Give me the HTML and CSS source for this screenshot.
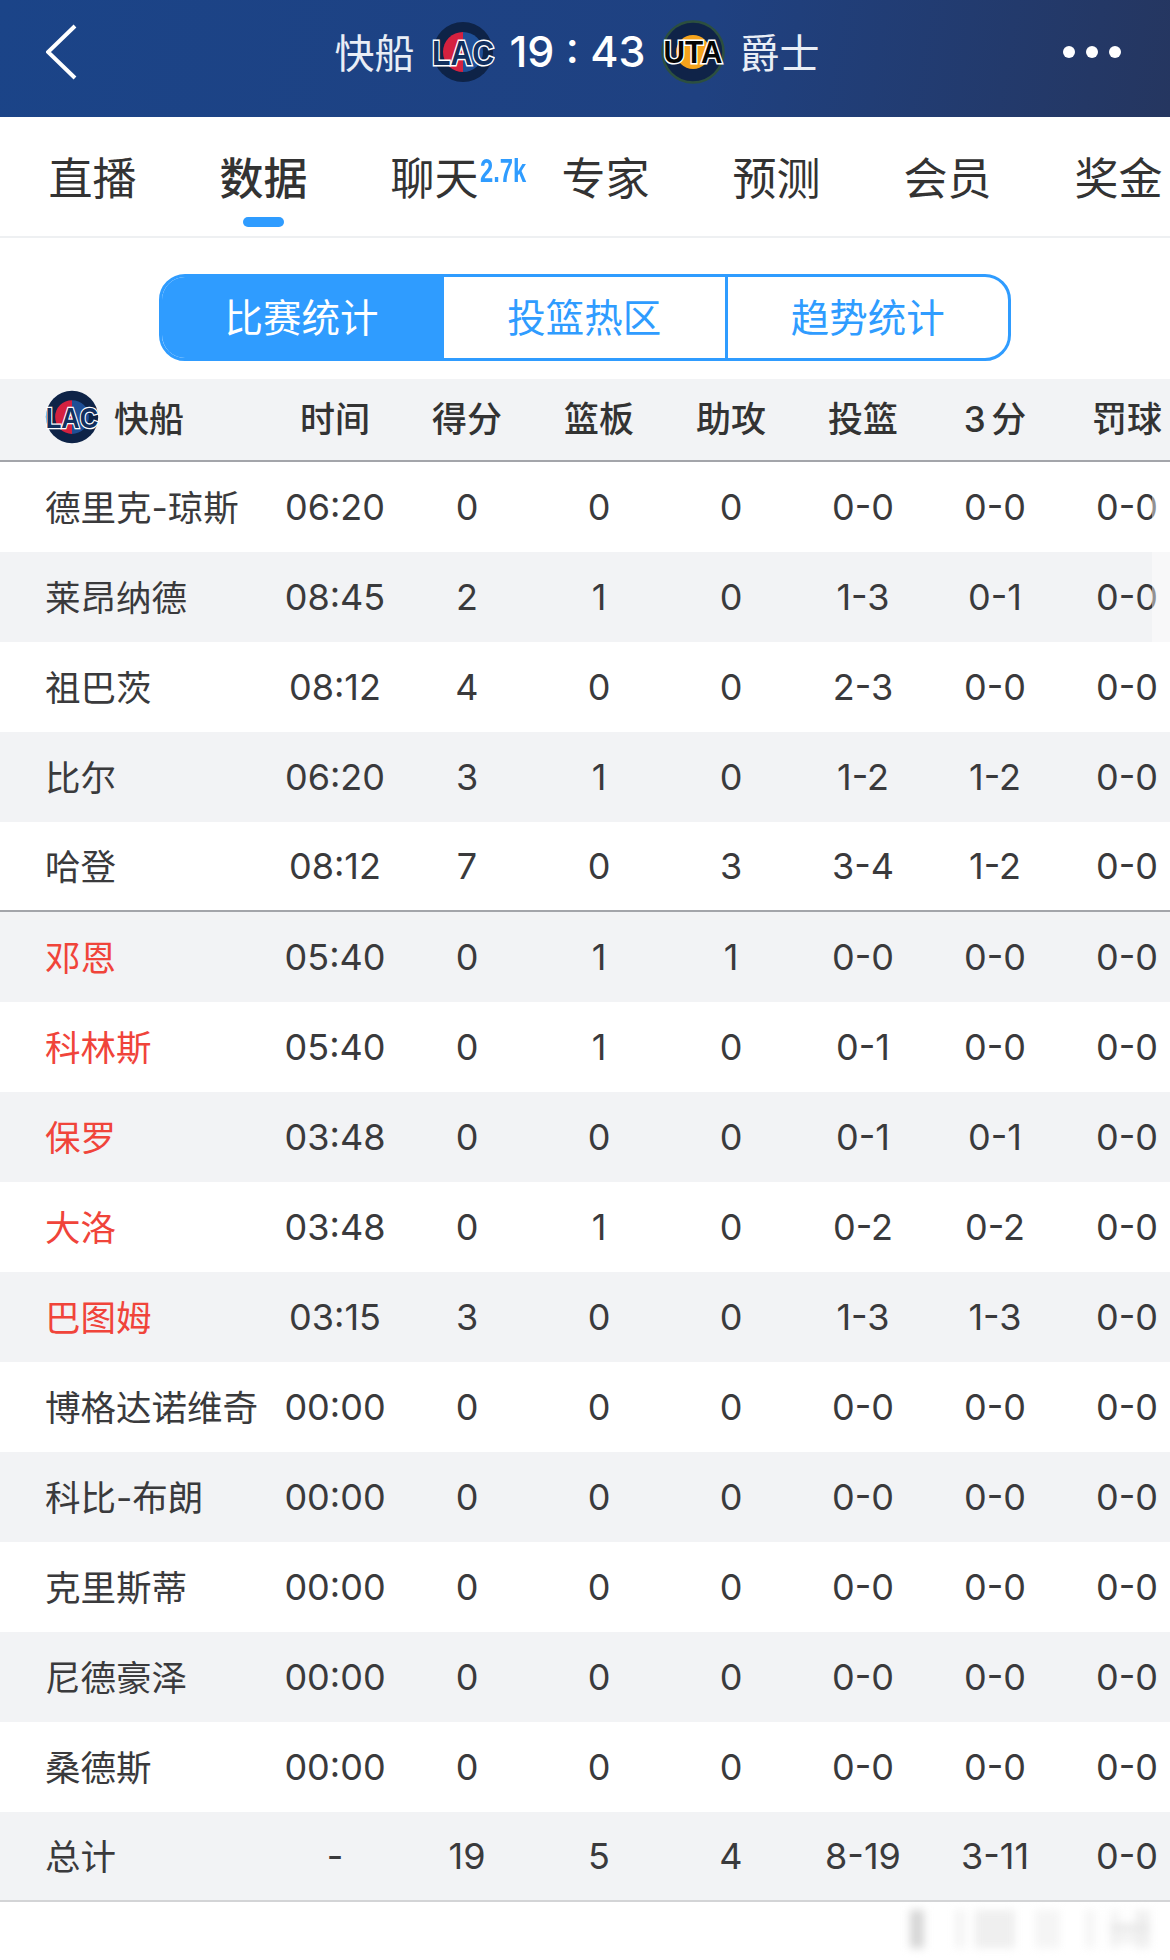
FILE: index.html
```html
<!DOCTYPE html>
<html lang="zh-CN">
<head>
<meta charset="utf-8">
<title>快船 19 : 43 爵士</title>
<link rel="stylesheet" href="styles.css">
</head>
<body>
<div class="page">
  <header class="topbar">
    <svg class="back" viewBox="0 0 32 56" width="32" height="56"><path d="M29 2 L2 28 L29 54" fill="none" stroke="#fff" stroke-width="4"/></svg>
    <div class="match">
      <span class="team">快船</span>
      <svg class="logo first" viewBox="0 0 64 64" width="64" height="64">
        <circle cx="32" cy="32" r="30" fill="#0e2347"/>
        <path d="M32 12a20 20 0 0 0 0 40z" fill="#d5213f"/>
        <path d="M32 12a20 20 0 0 1 0 40z" fill="#1f4f96"/>
        <text class="logo-text lac" text-anchor="middle" transform="translate(32 45) scale(.84 1)">LAC</text>
      </svg>
      <span class="score">19 : 43</span>
      <svg class="logo" viewBox="0 0 64 64" width="64" height="64">
        <circle cx="32" cy="32" r="30.5" fill="#0f2348" stroke="#2c4f3f" stroke-width="2.5"/>
        <circle cx="32" cy="32" r="17" fill="#f5a31c"/>
        <text class="logo-text uta" text-anchor="middle" transform="translate(32 43) scale(.93 1)">UTA</text>
      </svg>
      <span class="team">爵士</span>
    </div>
    <div class="dots"><i></i><i></i><i></i></div>
  </header>

  <nav class="tabs">
    <a class="tab">直播</a>
    <a class="tab active">数据</a>
    <a class="tab">聊天<sup class="badge">2.7k</sup></a>
    <a class="tab">专家</a>
    <a class="tab">预测</a>
    <a class="tab">会员</a>
    <a class="tab">奖金</a>
  </nav>

  <div class="seg-wrap">
    <div class="seg">
      <div class="seg-item on">比赛统计</div>
      <div class="seg-item">投篮热区</div>
      <div class="seg-item">趋势统计</div>
    </div>
  </div>

  <section class="table">
    <div class="row head">
      <div class="name">
        <svg class="logo-sm" viewBox="0 0 64 64" width="54" height="54">
          <circle cx="32" cy="32" r="31" fill="#0e2347"/>
          <path d="M32 12a20 20 0 0 0 0 40z" fill="#d5213f"/>
          <path d="M32 12a20 20 0 0 1 0 40z" fill="#1f4f96"/>
          <text class="logo-text lac" text-anchor="middle" transform="translate(32 45) scale(.84 1)">LAC</text>
        </svg>快船
      </div>
      <div>时间</div><div>得分</div><div>篮板</div><div>助攻</div><div>投篮</div><div class="three">3 分</div><div>罚球</div>
    </div>
    <div class="row"><div class="name">德里克-琼斯</div><div>06:20</div><div>0</div><div>0</div><div>0</div><div>0-0</div><div>0-0</div><div>0-0</div></div>
    <div class="row"><div class="name">莱昂纳德</div><div>08:45</div><div>2</div><div>1</div><div>0</div><div>1-3</div><div>0-1</div><div>0-0</div></div>
    <div class="row"><div class="name">祖巴茨</div><div>08:12</div><div>4</div><div>0</div><div>0</div><div>2-3</div><div>0-0</div><div>0-0</div></div>
    <div class="row"><div class="name">比尔</div><div>06:20</div><div>3</div><div>1</div><div>0</div><div>1-2</div><div>1-2</div><div>0-0</div></div>
    <div class="row last-starter"><div class="name">哈登</div><div>08:12</div><div>7</div><div>0</div><div>3</div><div>3-4</div><div>1-2</div><div>0-0</div></div>
    <div class="row"><div class="name red">邓恩</div><div>05:40</div><div>0</div><div>1</div><div>1</div><div>0-0</div><div>0-0</div><div>0-0</div></div>
    <div class="row"><div class="name red">科林斯</div><div>05:40</div><div>0</div><div>1</div><div>0</div><div>0-1</div><div>0-0</div><div>0-0</div></div>
    <div class="row"><div class="name red">保罗</div><div>03:48</div><div>0</div><div>0</div><div>0</div><div>0-1</div><div>0-1</div><div>0-0</div></div>
    <div class="row"><div class="name red">大洛</div><div>03:48</div><div>0</div><div>1</div><div>0</div><div>0-2</div><div>0-2</div><div>0-0</div></div>
    <div class="row"><div class="name red">巴图姆</div><div>03:15</div><div>3</div><div>0</div><div>0</div><div>1-3</div><div>1-3</div><div>0-0</div></div>
    <div class="row"><div class="name">博格达诺维奇</div><div>00:00</div><div>0</div><div>0</div><div>0</div><div>0-0</div><div>0-0</div><div>0-0</div></div>
    <div class="row"><div class="name">科比-布朗</div><div>00:00</div><div>0</div><div>0</div><div>0</div><div>0-0</div><div>0-0</div><div>0-0</div></div>
    <div class="row"><div class="name">克里斯蒂</div><div>00:00</div><div>0</div><div>0</div><div>0</div><div>0-0</div><div>0-0</div><div>0-0</div></div>
    <div class="row"><div class="name">尼德豪泽</div><div>00:00</div><div>0</div><div>0</div><div>0</div><div>0-0</div><div>0-0</div><div>0-0</div></div>
    <div class="row"><div class="name">桑德斯</div><div>00:00</div><div>0</div><div>0</div><div>0</div><div>0-0</div><div>0-0</div><div>0-0</div></div>
    <div class="row total"><div class="name">总计</div><div>-</div><div>19</div><div>5</div><div>4</div><div>8-19</div><div>3-11</div><div>0-0</div></div>
    <div class="edge-fade"></div>
  </section>

  <div class="watermark"></div>
</div>
</body>
</html>
```
FILE: styles.css
```css
* { box-sizing: border-box; }
html, body { margin: 0; padding: 0; background: #fff; }
body { font-family: Inter, "Noto Sans CJK SC", sans-serif; color: #333; }
.page { position: relative; width: 1170px; height: 1960px; overflow: hidden; }

.topbar {
  height: 117px;
  padding: 0 49px 14px 46px;
  display: grid;
  grid-template-columns: 1fr auto 1fr;
  align-items: center;
  background: linear-gradient(100deg, #1b4488 0%, #1f4181 60%, #253660 100%);
  color: #fff;
}
.back { display: block; }
.match { display: flex; align-items: center; margin-right: 13px; }
.team { font-family: "Noto Sans CJK SC", sans-serif; font-size: 40px; line-height: 1; color: #e9eef6; position: relative; top: -1px; }
.score { font-size: 43px; font-weight: 500; line-height: 1; white-space: pre; }
.logo { display: block; margin: 0 15px; }
.logo.first { margin: 0 14px 0 17px; }
.logo-text { font-family: "Liberation Sans", sans-serif; font-weight: 700; stroke: #fff; stroke-width: 3px; paint-order: stroke; }
.lac { fill: #12305f; font-size: 36px; }
.uta { fill: #050505; font-size: 32px; }
.dots { justify-self: end; display: flex; gap: 11px; }
.dots i { width: 12px; height: 12px; border-radius: 50%; background: #fff; display: block; }

.tabs {
  height: 121px;
  padding: 0 0 0 7px;
  display: flex;
  border-bottom: 2px solid #eef0f2;
  overflow: hidden;
}
.tab {
  position: relative;
  flex: 0 0 171px;
  text-align: center;
  font-family: "Noto Sans CJK SC", sans-serif;
  font-size: 44px;
  line-height: 52px;
  padding-top: 33px;
  color: #333;
}
.tab.active { font-weight: 500; }
.tab.active::after {
  content: "";
  position: absolute;
  left: 65px;
  top: 100px;
  width: 41px;
  height: 10px;
  border-radius: 5px;
  background: #2f9cff;
}
.badge {
  position: absolute;
  left: 131px;
  top: 38px;
  font-family: "Liberation Sans", sans-serif;
  font-size: 33px;
  line-height: 32px;
  font-weight: 700;
  color: #2f9cff;
  transform: scaleX(.72);
  transform-origin: left center;
}

.seg-wrap { padding: 36px 0 18px; display: flex; justify-content: center; }
.seg {
  width: 852px;
  height: 87px;
  display: grid;
  grid-template-columns: 279px 1fr 1fr;
  border: 3px solid #2f9cff;
  border-radius: 26px;
  overflow: hidden;
}
.seg-item {
  text-align: center;
  font-family: "Noto Sans CJK SC", sans-serif;
  font-size: 38.5px;
  line-height: 77px;
  color: #2f9cff;
}
.seg-item + .seg-item { border-left: 3px solid #2f9cff; }
.seg-item.on { background: #2f9cff; color: #fff; }

.table { position: relative; }
.row {
  width: 1193px;
  height: 90px;
  display: grid;
  grid-template-columns: 269px repeat(7, 132px);
  align-items: center;
  text-align: center;
  font-size: 36px;
  color: #3a3a3c;
}
.row:nth-child(odd) { background: #f2f3f5; }
.row .name {
  padding: 0 0 4px 45px;
  text-align: left;
  font-size: 35.5px;
  white-space: nowrap;
}
.row .name.red { color: #f0443a; }
.row.head {
  height: 83px;
  padding-bottom: 6px;
  background: #f2f3f5;
  font-size: 35px;
  font-weight: 500;
  border-bottom: 2px solid #a3a5aa;
  color: #333;
}
.row.head .name { display: flex; align-items: center; gap: 15px; padding-bottom: 0; font-size: 35px; }
.row.head .three { word-spacing: -4px; }
.logo-sm { display: block; }
.row.last-starter { border-bottom: 2px solid #a3a5aa; }
.row.total { border-bottom: 2px solid #d3d4d6; }

.edge-fade {
  position: absolute;
  right: 0;
  top: 83px;
  width: 18px;
  height: 182px;
  background: rgba(255,255,255,.45);
}
.watermark {
  position: absolute;
  left: 910px;
  top: 1910px;
  width: 255px;
  height: 38px;
  filter: blur(4px);
  background:
    linear-gradient(#e8e8e8, #e8e8e8) 200px 14px / 40px 8px no-repeat,
    linear-gradient(#eee, #eee) 200px 26px / 40px 6px no-repeat,
    linear-gradient(90deg, #d6d6d6 0 14px, transparent 14px 45px, #f4f4f4 45px 55px, transparent 55px 65px, #efefef 65px 105px, transparent 105px 125px, #f5f5f5 125px 150px, transparent 150px 175px, #f5f5f5 175px 185px, transparent 185px 200px, #f5f5f5 200px 210px, transparent 210px 225px, #f0f0f0 225px 240px, transparent 240px);
}
```
